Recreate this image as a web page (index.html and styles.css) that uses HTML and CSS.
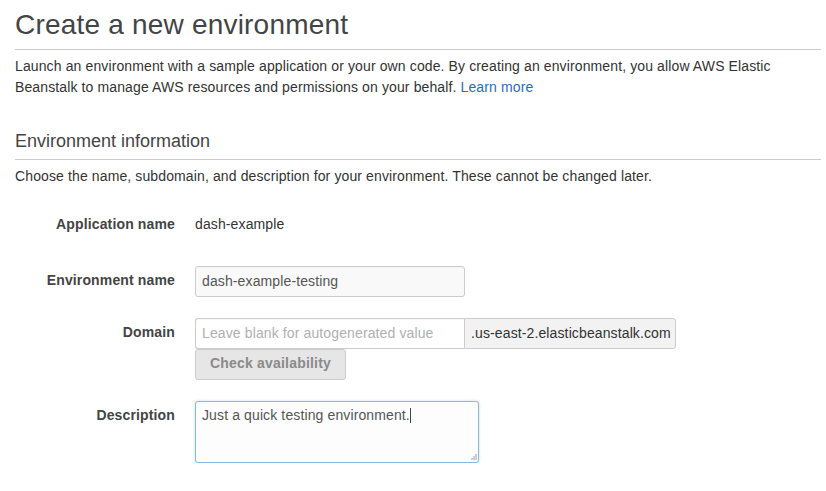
FILE: index.html
```html
<!DOCTYPE html>
<html lang="en">
<head>
<meta charset="utf-8">
<title>Create a new environment</title>
<link rel="stylesheet" href="styles.css">
</head>
<body>
<main class="page">
  <h1 class="title">Create a new environment</h1>
  <p class="intro">Launch an environment with a sample application or your own code. By creating an environment, you allow AWS Elastic Beanstalk to manage AWS resources and permissions on your behalf. <a class="link" href="#">Learn more</a></p>

  <h2 class="section-title">Environment information</h2>
  <p class="intro">Choose the name, subdomain, and description for your environment. These cannot be changed later.</p>

  <form class="form">
    <div class="row row-static">
      <label class="label">Application name</label>
      <div class="static">dash-example</div>
    </div>
    <div class="row">
      <label class="label" for="env">Environment name</label>
      <input class="input input-env" id="env" type="text" value="dash-example-testing">
    </div>
    <div class="row">
      <label class="label" for="domain">Domain</label>
      <div class="field-col">
        <div class="input-group">
          <input class="input input-domain" id="domain" type="text" placeholder="Leave blank for autogenerated value">
          <span class="addon">.us-east-2.elasticbeanstalk.com</span>
        </div>
        <button class="btn" type="button">Check availability</button>
      </div>
    </div>
    <div class="row">
      <label class="label">Description</label>
      <div class="textarea" role="textbox">Just a quick testing environment.<span class="caret"></span>
        <svg class="grip" width="7" height="7" viewBox="0 0 7 7"><g fill="#cfcfcf"><rect x="5" y="0" width="2" height="2"/><rect x="3" y="2" width="2" height="2"/><rect x="5" y="2" width="2" height="2"/><rect x="1" y="4" width="2" height="2"/><rect x="3" y="4" width="2" height="2"/><rect x="5" y="4" width="2" height="2"/></g></svg>
      </div>
    </div>
  </form>
</main>
</body>
</html>
```

FILE: styles.css
```css
* { box-sizing: border-box; }

html, body {
  margin: 0;
  padding: 0;
  background: #ffffff;
}

body {
  font-family: "Liberation Sans", Arial, Helvetica, sans-serif;
  font-size: 14px;
  color: #333333;
  letter-spacing: 0.12px;
}

.page {
  padding: 9px 5px 0 15px;
}

.title {
  margin: 0;
  font-size: 28px;
  line-height: 31px;
  font-weight: normal;
  letter-spacing: 0.2px;
  color: #444444;
  padding-bottom: 9px;
  border-bottom: 1px solid #cccccc;
}

.intro {
  margin: 6px 0 0 0;
  line-height: 21px;
  color: #333333;
}

.link {
  color: #1f6fbf;
  text-decoration: none;
}

.section-title {
  margin: 33px 0 0 0;
  font-size: 18px;
  line-height: 20px;
  font-weight: normal;
  letter-spacing: 0;
  color: #444444;
  padding-bottom: 8px;
  border-bottom: 1px solid #cccccc;
}

.form {
  margin-top: 22px;
  display: flex;
  flex-direction: column;
  gap: 21px;
}

.row {
  display: flex;
  align-items: flex-start;
  gap: 20px;
}

.row-static {
  padding-bottom: 5px;
}

.label {
  width: 160px;
  flex: none;
  text-align: right;
  font-weight: bold;
  letter-spacing: 0.14px;
  line-height: 21px;
  padding-top: 4px;
  color: #444444;
}

.row-static .label {
  padding-top: 5px;
}

.static {
  line-height: 21px;
  padding-top: 5px;
  padding-bottom: 5px;
  color: #333333;
}

.input {
  font-family: inherit;
  font-size: 14px;
  letter-spacing: 0.12px;
  color: #555555;
  height: 31px;
  border: 1px solid #cccccc;
  border-radius: 3px;
  padding: 0 6px;
  margin: 0;
  outline: none;
  box-shadow: inset 0 1px 1px rgba(0, 0, 0, 0.03);
}

.input-env {
  width: 270px;
  background: #f9f9f9;
  padding-bottom: 2px;
}

.field-col {
  display: flex;
  flex-direction: column;
  align-items: flex-start;
}

.input-group {
  display: flex;
}

.input-domain {
  width: 269px;
  height: 31px;
  background: #ffffff;
  border-right: none;
  border-radius: 3px 0 0 3px;
  padding-bottom: 2px;
}

.input-domain::placeholder {
  color: #b0b0b0;
}

.addon {
  width: 212px;
  height: 31px;
  display: flex;
  align-items: center;
  padding-left: 6px;
  padding-bottom: 2px;
  background: #f2f2f2;
  border: 1px solid #cccccc;
  border-radius: 0 3px 3px 0;
  color: #333333;
  white-space: nowrap;
}

.btn {
  width: 151px;
  height: 31px;
  margin: 0;
  font-family: inherit;
  font-size: 14px;
  font-weight: bold;
  letter-spacing: 0.2px;
  color: #8a8a8a;
  background: #e6e6e6;
  border: 1px solid #cccccc;
  border-radius: 3px;
  padding: 0 0 3px 0;
}

.textarea {
  position: relative;
  width: 284px;
  height: 62px;
  padding: 3px 6px;
  line-height: 21px;
  color: #555555;
  background: #fdfdfd;
  border: 1px solid #86b9e6;
  border-radius: 3px;
  box-shadow: 0 0 3px rgba(102, 175, 233, 0.45);
}

.caret {
  display: inline-block;
  width: 1px;
  height: 15px;
  background: #444444;
  vertical-align: -3px;
}

.grip {
  position: absolute;
  right: 1px;
  bottom: 1px;
}
```
